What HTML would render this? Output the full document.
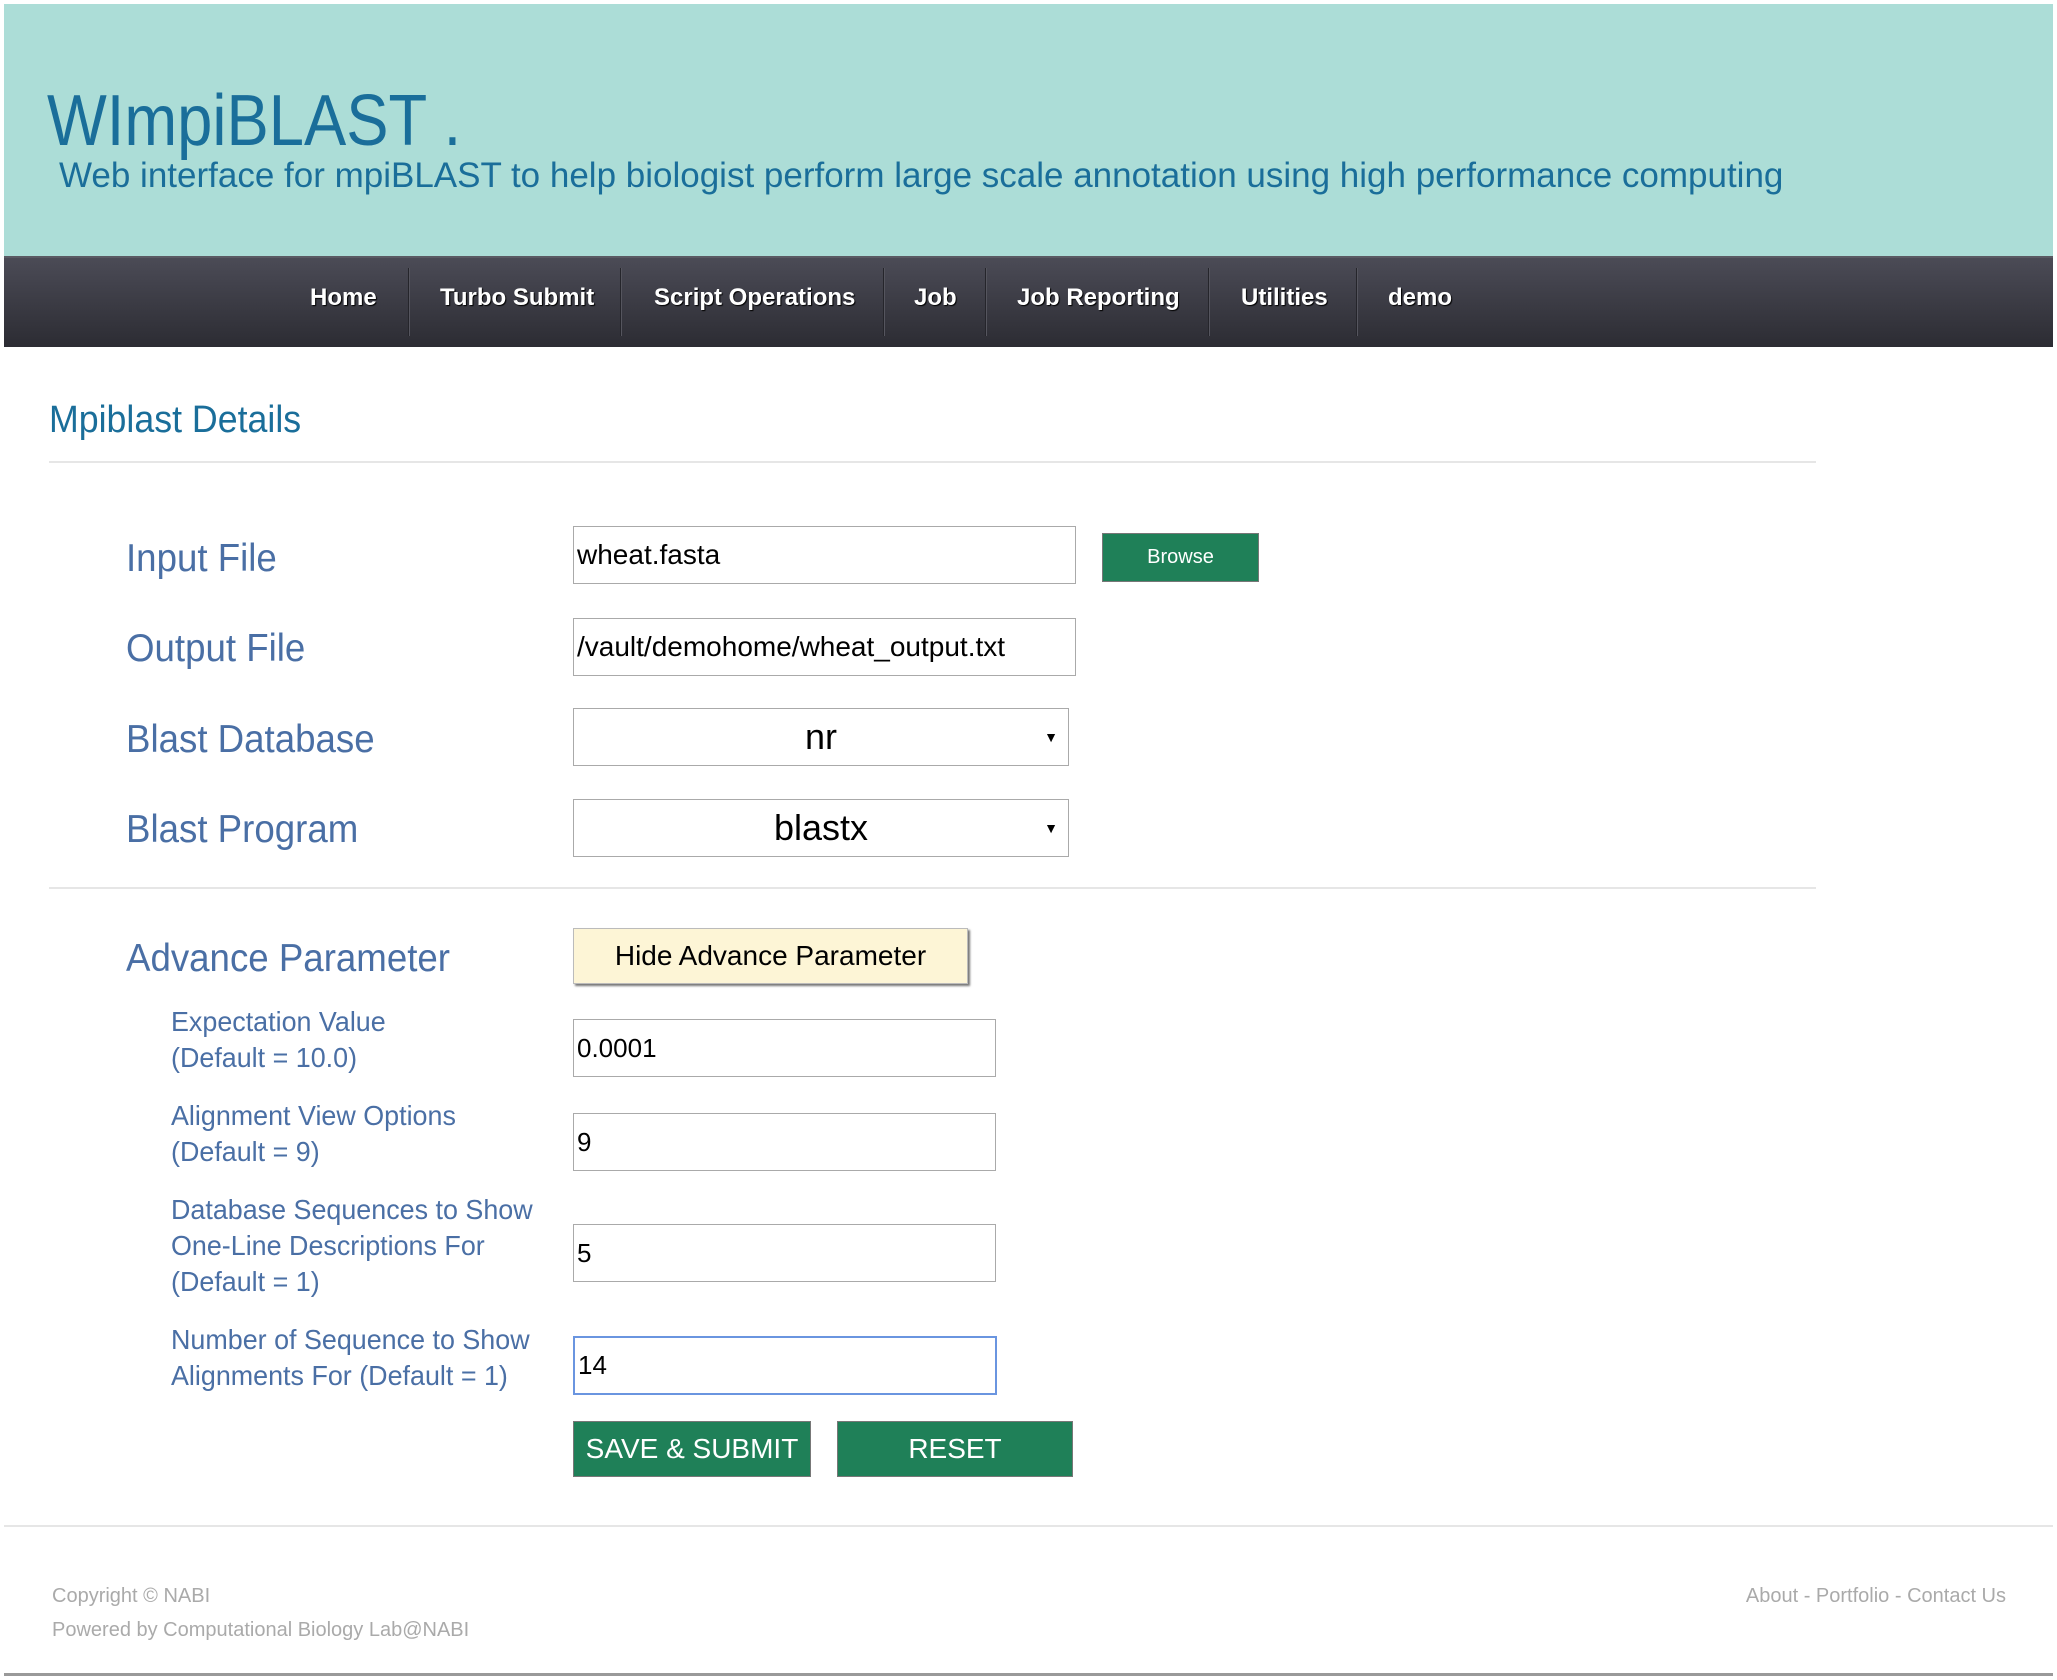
<!DOCTYPE html>
<html><head><meta charset="utf-8"><style>
body{margin:0;width:2057px;height:1680px;background:#fff;position:relative;overflow:hidden;font-family:"Liberation Sans",sans-serif}
.a{position:absolute;white-space:nowrap}
#hdr{left:4px;top:4px;width:2049px;height:252px;background:#acddd7}
#nav{left:4px;top:256px;width:2049px;height:89px;background:linear-gradient(#4b4b56,#2c2c33);border-top:2px solid #5a5a63}
.ni{position:absolute;top:0;height:80px;line-height:80px;color:#fff;font-weight:bold;font-size:24px;text-shadow:1px 1px 1px #000}
.sep{position:absolute;top:10px;width:1px;height:68px;background:#25252b;border-right:1px solid #55555e}
.lab{color:#4a6fa5;font-size:39px;transform:scaleX(.94);transform-origin:left}
.sl{color:#4a6fa5;font-size:28px;line-height:36px;transform:scaleX(.96);transform-origin:left}
.in{position:absolute;border:1px solid #aaa;background:#fff;box-sizing:border-box;font-size:28px;padding-left:3px;display:flex;align-items:center}
.hr{position:absolute;height:2px;background:#e6e6e6}
.gb{position:absolute;background:#1f8058;color:#fff;display:flex;align-items:center;justify-content:center;box-sizing:border-box;border:1px solid #777}
.sel{position:absolute;border:1px solid #aaa;box-sizing:border-box;font-size:36px;display:flex;align-items:center;justify-content:center}
.sel span.ar{position:absolute;right:10px;font-size:14px}
</style></head><body>
<div id="hdr" class="a"></div>
<div class="a" style="left:47px;top:80px;font-size:72px;color:#1a6e9a;transform:scaleX(.88);transform-origin:left">WImpiBLAST .</div>
<div class="a" style="left:59px;top:156px;font-size:35px;color:#1a6e9a">Web interface for mpiBLAST to help biologist perform large scale annotation using high performance computing</div>
<div id="nav" class="a">
<div class="ni" style="left:306px">Home</div>
<div class="sep" style="left:404px"></div>
<div class="ni" style="left:436px">Turbo Submit</div>
<div class="sep" style="left:616px"></div>
<div class="ni" style="left:650px">Script Operations</div>
<div class="sep" style="left:879px"></div>
<div class="ni" style="left:910px">Job</div>
<div class="sep" style="left:981px"></div>
<div class="ni" style="left:1013px">Job Reporting</div>
<div class="sep" style="left:1204px"></div>
<div class="ni" style="left:1237px">Utilities</div>
<div class="sep" style="left:1352px"></div>
<div class="ni" style="left:1384px">demo</div>
</div>
<div class="a" style="left:49px;top:399px;font-size:38px;color:#1a6e9a;transform:scaleX(.94);transform-origin:left">Mpiblast Details</div>
<div class="hr" style="left:49px;top:461px;width:1767px"></div>
<div class="a lab" style="left:126px;top:537px">Input File</div>
<div class="in" style="left:573px;top:526px;width:503px;height:58px">wheat.fasta</div>
<div class="gb" style="left:1102px;top:533px;width:157px;height:49px;font-size:20px">Browse</div>
<div class="a lab" style="left:126px;top:627px">Output File</div>
<div class="in" style="left:573px;top:618px;width:503px;height:58px">/vault/demohome/wheat_output.txt</div>
<div class="a lab" style="left:126px;top:718px">Blast Database</div>
<div class="sel" style="left:573px;top:708px;width:496px;height:58px">nr<span class="ar">▼</span></div>
<div class="a lab" style="left:126px;top:808px">Blast Program</div>
<div class="sel" style="left:573px;top:799px;width:496px;height:58px">blastx<span class="ar">▼</span></div>
<div class="hr" style="left:49px;top:887px;width:1767px"></div>
<div class="a lab" style="left:126px;top:937px">Advance Parameter</div>
<div class="a" style="left:573px;top:928px;width:395px;height:56px;background:#fdf5d6;border:1px solid #bbb;box-shadow:2px 2px 2px #777;box-sizing:border-box;display:flex;align-items:center;justify-content:center;font-size:28px">Hide Advance Parameter</div>
<div class="a sl" style="left:171px;top:1004px">Expectation Value<br>(Default = 10.0)</div>
<div class="in" style="left:573px;top:1019px;width:423px;height:58px;font-size:26px">0.0001</div>
<div class="a sl" style="left:171px;top:1098px">Alignment View Options<br>(Default = 9)</div>
<div class="in" style="left:573px;top:1113px;width:423px;height:58px;font-size:26px">9</div>
<div class="a sl" style="left:171px;top:1192px">Database Sequences to Show<br>One-Line Descriptions For<br>(Default = 1)</div>
<div class="in" style="left:573px;top:1224px;width:423px;height:58px;font-size:26px">5</div>
<div class="a sl" style="left:171px;top:1322px">Number of Sequence to Show<br>Alignments For (Default = 1)</div>
<div class="in" style="left:573px;top:1336px;width:424px;height:59px;font-size:26px;border:2px solid #6a95e0">14</div>
<div class="gb" style="left:573px;top:1421px;width:238px;height:56px;font-size:28px">SAVE &amp; SUBMIT</div>
<div class="gb" style="left:837px;top:1421px;width:236px;height:56px;font-size:28px">RESET</div>
<div class="hr" style="left:4px;top:1525px;width:2049px"></div>
<div class="a" style="left:52px;top:1585px;font-size:20px;color:#aaa">Copyright © NABI</div>
<div class="a" style="left:52px;top:1619px;font-size:20px;color:#aaa">Powered by Computational Biology Lab@NABI</div>
<div class="a" style="right:51px;top:1585px;font-size:20px;color:#aaa">About - Portfolio - Contact Us</div>
<div class="a" style="left:4px;top:1673px;width:2049px;height:3px;background:#999"></div>
</body></html>
